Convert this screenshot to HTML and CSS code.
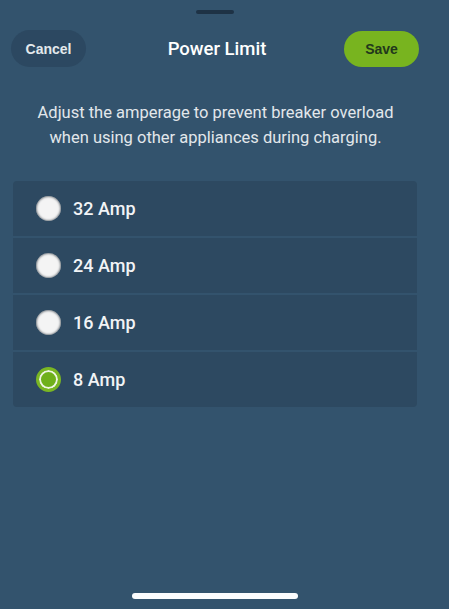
FILE: index.html
```html
<!DOCTYPE html>
<html>
<head>
    <meta charset="UTF-8">
    <title>Power Limit</title>
    <link rel="stylesheet" href="styles.css">
</head>
<body>
    <div class="sheet">
        <div class="grabber"></div>

        <div class="topbar">
            <button class="btn btn-cancel">Cancel</button>
            <h1>Power Limit</h1>
            <button class="btn btn-save">Save</button>
        </div>

        <p class="intro">Adjust the amperage to prevent breaker overload when using other appliances during charging.</p>

        <div class="options">
            <label class="option">
                <input type="radio" name="amp" value="32">
                <span class="dot"></span>
                <span class="amp">32 Amp</span>
            </label>
            <label class="option">
                <input type="radio" name="amp" value="24">
                <span class="dot"></span>
                <span class="amp">24 Amp</span>
            </label>
            <label class="option">
                <input type="radio" name="amp" value="16">
                <span class="dot"></span>
                <span class="amp">16 Amp</span>
            </label>
            <label class="option">
                <input type="radio" name="amp" value="8" checked>
                <span class="dot"></span>
                <span class="amp">8 Amp</span>
            </label>
        </div>

        <div class="spacer"></div>
        <div class="home-bar"></div>
    </div>
</body>
</html>
```

FILE: styles.css
```css
html, body {
    margin: 0;
    height: 100%;
}

body {
    font-family: Roboto, "Liberation Sans", Arial, sans-serif;
    background-color: #33536d;
    color: #fff;
}

.sheet {
    height: 100%;
    display: flex;
    flex-direction: column;
    box-sizing: border-box;
    padding: 10px 0 10px;
}

.grabber {
    width: 38px;
    height: 4px;
    border-radius: 2px;
    background-color: #1e3245;
    margin-left: 196px;
}

.topbar {
    display: flex;
    align-items: center;
    justify-content: space-between;
    padding: 16px 30px 0 11px;
}

.topbar h1 {
    margin: 0 0 0 4px;
    font-family: Roboto, "Liberation Sans", sans-serif;
    font-size: 18.5px;
    font-weight: 500;
    color: #fff;
}

.btn {
    width: 75px;
    height: 37px;
    border: none;
    border-radius: 19px;
    font-family: "Liberation Sans", Arial, sans-serif;
    font-size: 14px;
    font-weight: bold;
    cursor: pointer;
}

.btn-cancel {
    background-color: #2c4861;
    color: #e3e8ec;
}

.btn-save {
    background-color: #78b41f;
    color: #22381c;
    height: 36px;
}

.intro {
    margin: 33px 48px 0 30px;
    text-align: center;
    font-size: 16.5px;
    line-height: 25px;
    color: #e2e7eb;
}

.options {
    margin: 31px 32px 0 13px;
    display: flex;
    flex-direction: column;
    gap: 2px;
}

.option {
    display: flex;
    align-items: center;
    height: 55px;
    padding-left: 23px;
    background-color: #2d4961;
    cursor: pointer;
}

.option:first-child {
    border-radius: 4px 4px 0 0;
}

.option:last-child {
    border-radius: 0 0 4px 4px;
}

.option input {
    display: none;
}

.dot {
    width: 25px;
    height: 25px;
    border-radius: 50%;
    background-color: #f4f4f4;
    box-shadow: 0 0 2px 1px rgba(20, 30, 40, 0.5) inset;
    box-sizing: border-box;
}

.option input:checked + .dot {
    background-color: #6fb01b;
    border: 3px solid #7ab623;
    box-shadow: 0 0 0 2px #eef5e3 inset;
}

.amp {
    margin-left: 12px;
    font-size: 18px;
    font-weight: 500;
    color: #f2f4f6;
}

.spacer {
    flex: 1;
}

.home-bar {
    width: 166px;
    height: 6px;
    border-radius: 3px;
    background-color: #fbfcfd;
    margin-left: 132px;
}
```
